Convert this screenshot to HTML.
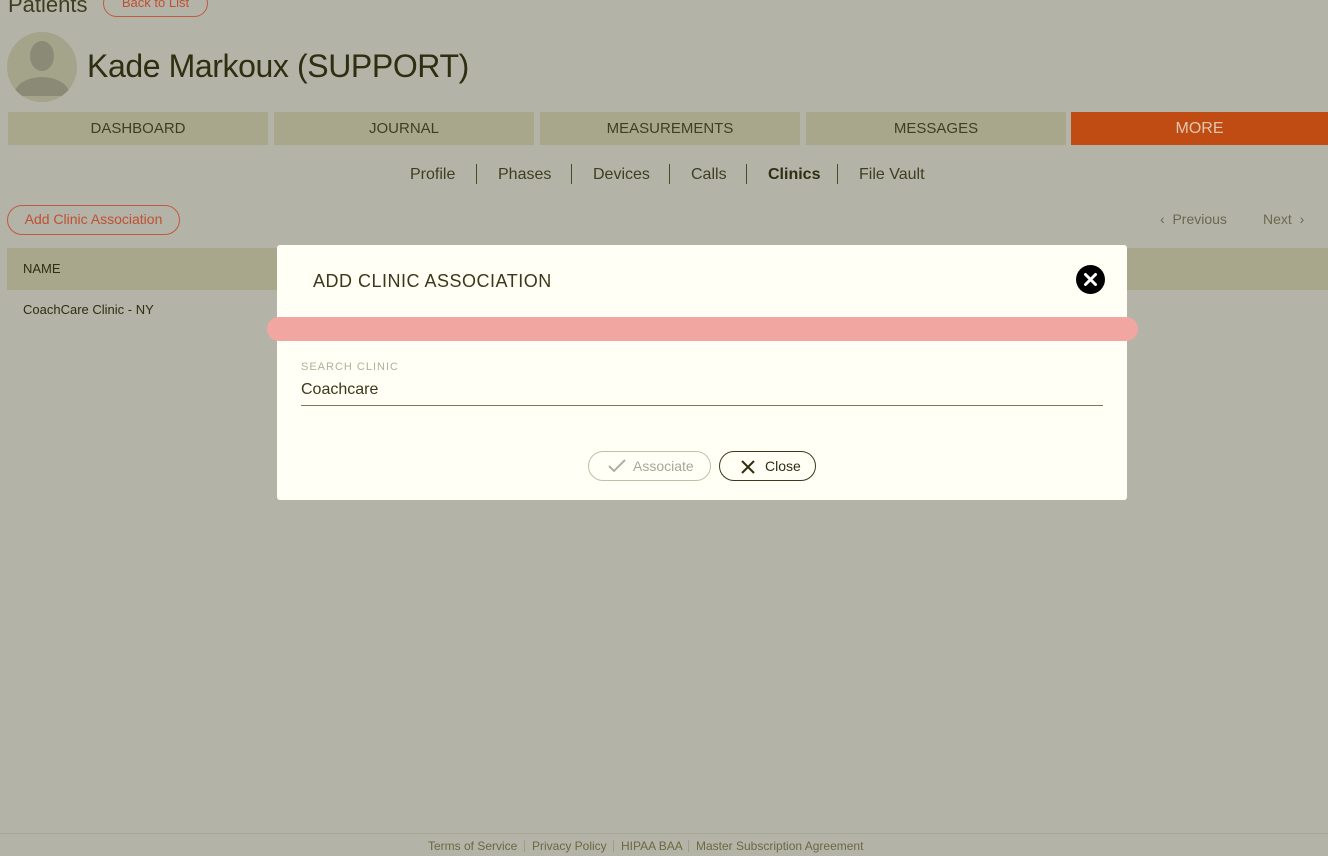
<!DOCTYPE html>
<html><head><meta charset="utf-8"><style>
*{box-sizing:border-box;margin:0;padding:0}
body{width:1328px;height:856px;overflow:hidden;background:#b4b3a8;font-family:"Liberation Sans",sans-serif;color:#3a3a1a;position:relative}
.abs{position:absolute}
.tab{position:absolute;top:112px;height:33px;background:#a8a78c;color:#3e3e20;font-size:15px;text-align:center;line-height:33px}
.sub{position:absolute;top:166px;font-size:16px;color:#3e3e20}
.sep{position:absolute;top:164px;width:1px;height:20px;background:#4a4a20}
.foot{position:absolute;top:839px;font-size:12px;color:#6a6a40}
</style></head><body>
<div class="abs" style="left:8px;top:-8px;font-size:22px;color:#3e3e20">Patients</div>
<div class="abs" style="left:103px;top:-10px;width:105px;height:27px;border:1px solid #c05a40;border-radius:14px;color:#c05030;font-size:13px;text-align:center;line-height:24px">Back to List</div>
<div class="abs" style="left:7px;top:32px;width:70px;height:70px;border-radius:50%;background:#a4a48a;overflow:hidden">
<svg width="70" height="70"><ellipse cx="35" cy="24" rx="12" ry="15" fill="#8a8a76"/><path d="M6 64 Q10 46 35 45 Q60 46 64 64 Z" fill="#8a8a76"/></svg></div>
<div class="abs" style="left:87px;top:48px;font-size:32px;color:#2e2e10;letter-spacing:-0.4px">Kade Markoux (SUPPORT)</div>
<div class="tab" style="left:8px;width:260px">DASHBOARD</div>
<div class="tab" style="left:274px;width:260px">JOURNAL</div>
<div class="tab" style="left:540px;width:260px">MEASUREMENTS</div>
<div class="tab" style="left:806px;width:260px">MESSAGES</div>
<div class="tab" style="left:1071px;width:257px;background:#c04c14;color:#e0c8b0;font-size:16px">MORE</div>
<div class="sub" style="left:410px">Profile</div><div class="sep" style="left:476px"></div>
<div class="sub" style="left:498px">Phases</div><div class="sep" style="left:571px"></div>
<div class="sub" style="left:593px">Devices</div><div class="sep" style="left:669px"></div>
<div class="sub" style="left:691px">Calls</div><div class="sep" style="left:746px"></div>
<div class="sub" style="left:768px;font-weight:bold;color:#2e2e10">Clinics</div><div class="sep" style="left:837px"></div>
<div class="sub" style="left:859px">File Vault</div>
<div class="abs" style="left:7px;top:205px;width:173px;height:30px;border:1px solid #c05a40;border-radius:15px;color:#c05030;font-size:14px;text-align:center;line-height:27px">Add Clinic Association</div>
<div class="abs" style="left:1160px;top:211px;font-size:14px;color:#6a6a50">‹&nbsp; Previous</div>
<div class="abs" style="left:1263px;top:211px;font-size:14px;color:#6a6a50">Next &nbsp;›</div>
<div class="abs" style="left:7px;top:248px;width:1321px;height:42px;background:#a8a78c"></div>
<div class="abs" style="left:23px;top:261px;font-size:13px;color:#2e2e10">NAME</div>
<div class="abs" style="left:23px;top:302px;font-size:13px;color:#2e2e10">CoachCare Clinic - NY</div>
<div class="abs" style="left:277px;top:245px;width:850px;height:255px;background:#fffff6;border-radius:3px"></div>
<div class="abs" style="left:313px;top:271px;font-size:18px;color:#3a3a1a;letter-spacing:0.5px">ADD CLINIC ASSOCIATION</div>
<div class="abs" style="left:1076px;top:265px;width:29px;height:29px;border-radius:50%;background:#000">
<svg width="29" height="29"><path d="M9.5 9.5L19.5 19.5M19.5 9.5L9.5 19.5" stroke="#fff" stroke-width="3" stroke-linecap="round"/></svg></div>
<div class="abs" style="left:267px;top:317px;width:871px;height:24px;background:#f2a6a2;border-radius:12px"></div>
<div class="abs" style="left:301px;top:361px;font-size:11px;letter-spacing:1px;color:#b0b09a">SEARCH CLINIC</div>
<div class="abs" style="left:301px;top:381px;font-size:16px;color:#3a3a1a">Coachcare</div>
<div class="abs" style="left:301px;top:405px;width:802px;height:1px;background:#7a7a5a"></div>
<div class="abs" style="left:588px;top:451px;width:123px;height:30px;border:1px solid #c0c0a8;border-radius:15px;color:#a8a898;font-size:14px;line-height:28px;padding-left:44px">Associate
<svg class="abs" style="left:18px;top:6px" width="20" height="16"><path d="M2 8L7 13L18 2" stroke="#b0b0a0" stroke-width="2" fill="none"/></svg></div>
<div class="abs" style="left:719px;top:451px;width:97px;height:30px;border:1px solid #3a3a1a;border-radius:15px;color:#2e2e10;font-size:14px;line-height:28px;padding-left:45px">Close
<svg class="abs" style="left:20px;top:7px" width="16" height="16"><path d="M2 2L14 14M14 2L2 14" stroke="#2e2e10" stroke-width="2"/></svg></div>
<div class="abs" style="left:0;top:833px;width:1328px;height:1px;background:#a8a898"></div>
<div class="foot" style="left:428px">Terms of Service</div>
<div class="foot" style="left:532px">Privacy Policy</div>
<div class="foot" style="left:621px">HIPAA BAA</div>
<div class="foot" style="left:696px">Master Subscription Agreement</div>
<div class="abs" style="left:524px;top:840px;width:1px;height:12px;background:#a0a080"></div>
<div class="abs" style="left:613px;top:840px;width:1px;height:12px;background:#a0a080"></div>
<div class="abs" style="left:688px;top:840px;width:1px;height:12px;background:#a0a080"></div>
</body></html>
